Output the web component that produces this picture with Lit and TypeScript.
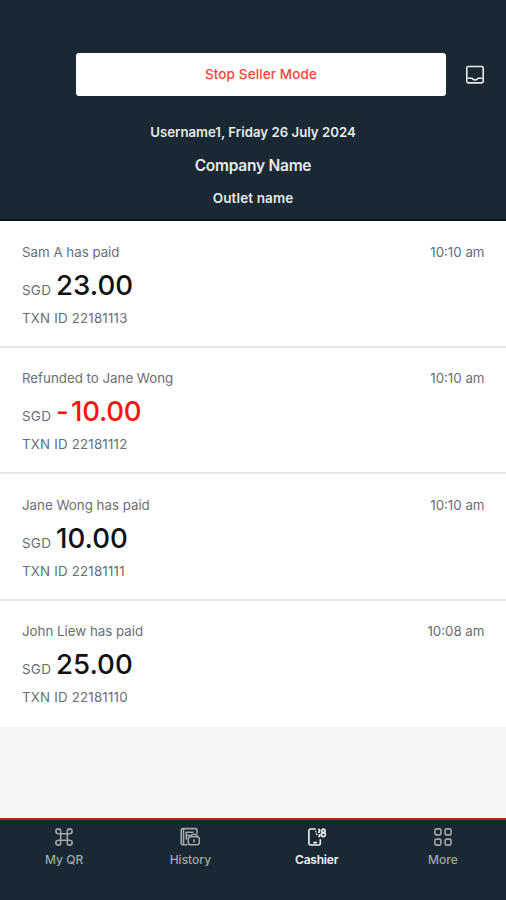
import { LitElement, html, css, svg } from "lit";
import { customElement, property } from "lit/decorators.js";
import { classMap } from "lit/directives/class-map.js";

interface Txn {
  title: string;
  time: string;
  amount: string;
  id: string;
  refund?: boolean;
}

const TXNS: Txn[] = [
  { title: "Sam A has paid", time: "10:10 am", amount: "23.00", id: "22181113" },
  { title: "Refunded to Jane Wong", time: "10:10 am", amount: "- 10.00", id: "22181112", refund: true },
  { title: "Jane Wong has paid", time: "10:10 am", amount: "10.00", id: "22181111" },
  { title: "John Liew has paid", time: "10:08 am", amount: "25.00", id: "22181110" },
];

const ICONS = {
  inbox: svg`<rect x="1.800" y="1.500" width="16.400" height="16.400" rx="1.600"/><path d="M2.500 13.200H7c.6 1.300 1.600 1.800 3 1.800s2.400-.5 3-1.800h4.500"/>`,
  qr: svg`<rect x="6.700" y="6.700" width="6.600" height="6.600"/><path d="M6.700 6.700H4.300a2.400 2.400 0 1 1 2.400-2.400zM13.300 6.700V4.300a2.400 2.400 0 1 1 2.400 2.400zM13.300 13.300h2.400a2.400 2.400 0 1 1-2.400 2.400zM6.700 13.300v2.400a2.400 2.400 0 1 1-2.400-2.400z"/>`,
  history: svg`<path d="M7.500 17.800H2.800A1.600 1.600 0 0 1 1.200 16.200V3.200A1.600 1.600 0 0 1 2.800 1.600h12.600A1.600 1.600 0 0 1 17 3.200v3.600M3.500 1.900v15.600M6.300 12.500V5.300h7M6.800 8.500h3.400"/><rect x="8.300" y="9.800" width="11" height="7.900" rx="2.300"/><path d="M10.600 9.800c.2-1.800 1.300-2.600 3.300-2.600s3.100.8 3.400 2.600M14 12.200v3.200"/>`,
  cashier: svg`<path d="M8.800 2H3.600a1.700 1.700 0 0 0-1.700 1.700v12.600A1.700 1.700 0 0 0 3.600 18h8a1.700 1.700 0 0 0 1.700-1.700V12.300M6.300 15.600h3.600"/><path d="M8.100 4.600h1.200M8.900 7.200h1.600M11 2.500h1.500v2.600h-1.300M12.700 7v2.500h-1.500"/><circle cx="16.400" cy="3.800" r="1.700"/><circle cx="16.400" cy="7.600" r="2"/>`,
  more: svg`<rect x="1.900" y="1.900" width="6" height="6" rx="1.500"/><rect x="12.100" y="1.900" width="6" height="6" rx="1.500"/><rect x="1.900" y="12.100" width="6" height="6" rx="1.500"/><rect x="12.100" y="12.100" width="6" height="6" rx="1.500"/>`,
};

@customElement("ui-icon")
class UiIcon extends LitElement {
  @property() name: keyof typeof ICONS = "more";
  static styles = css`
    :host { display: block; width: 20px; height: 20px; }
    svg { display: block; fill: none; stroke: currentColor; stroke-width: 1.6; stroke-linejoin: round; }
  `;
  render() {
    return html`<svg width="20" height="20" viewBox="0 0 20 20">${ICONS[this.name]}</svg>`;
  }
}

@customElement("txn-row")
class TxnRow extends LitElement {
  @property({ attribute: false }) txn!: Txn;
  static styles = css`
    :host {
      display: block; box-sizing: border-box; height: 126.6px; padding: 20.500px 21.500px 0 22px;
      background: #fff; border-bottom: 2px solid #e4e6e8; color: #686e74;
      font-size: 13.3px; line-height: 20px; letter-spacing: 0;
    }
    :host(:last-child) { border-bottom: 0; }
    .top { display: flex; justify-content: space-between; }
    .sum { display: flex; align-items: baseline; gap: 5px; height: 36px; margin: 5px 0; line-height: 36px; }
    .cur { font-size: 13.5px; letter-spacing: 0.2px; }
    .amount { font-size: 27.6px; font-weight: 500; color: #111; letter-spacing: 0; }
    .refund { color: #fa150c; word-spacing: -4.5px; letter-spacing: -0.3px; }
    .id { letter-spacing: 0.2px; }
  `;
  render() {
    const t = this.txn;
    return html`
      <div class="top"><span>${t.title}</span><span>${t.time}</span></div>
      <div class="sum"><span class="cur">SGD</span><span class=${classMap({ amount: true, refund: !!t.refund })}>${t.amount}</span></div>
      <div class="id">TXN ID ${t.id}</div>
    `;
  }
}

@customElement("app-root")
class AppRoot extends LitElement {
  static styles = css`
    :host {
      display: flex; flex-direction: column; height: 900px; overflow: hidden;
      background: #f4f6f8; font-family: Inter, "Liberation Sans", sans-serif;
    }
    header {
      box-sizing: border-box; height: 221px; flex: none; padding-top: 53px;
      background: #192833; color: #e8eaec; border-bottom: 2px solid #0c161f;
    }
    .bar { display: flex; align-items: center; padding-left: 76px; }
    button {
      width: 370px; height: 43px; padding: 0; border: 0; border-radius: 3px; background: #fff;
      color: #f94535; font: 500 13.5px/43px Inter, sans-serif; letter-spacing: 0.12px;
    }
    .bar ui-icon { margin-left: 19px; }
    .info { display: flex; flex-direction: column; align-items: center; padding-top: 20px; font-size: 13.2px; font-weight: 600; line-height: 33px; }
    .user { letter-spacing: 0.03px; }
    .company { font-size: 15.500px; letter-spacing: -0.25px; }
    .outlet { font-size: 13.500px; letter-spacing: 0.12px; }
    main { flex: 1; }
    nav {
      box-sizing: border-box; height: 82px; flex: none; display: flex; padding: 7px 0 0 1px;
      background: #192833; border-top: 2px solid #d3141b; color: #9fa7ad;
    }
    .tab {
      width: 126.500px; display: flex; flex-direction: column; align-items: center;
      font-size: 12px; font-weight: 500; line-height: 18px; gap: 4px;
    }
    .active { color: #f2f4f5; font-weight: 600; letter-spacing: -0.2px; }
  `;
  render() {
    return html`
      <header>
        <div class="bar"><button>Stop Seller Mode</button><ui-icon name="inbox"></ui-icon></div>
        <div class="info">
          <span class="user">Username1, Friday 26 July 2024</span>
          <span class="company">Company Name</span>
          <span class="outlet">Outlet name</span>
        </div>
      </header>
      <main>${TXNS.map((t) => html`<txn-row .txn=${t}></txn-row>`)}</main>
      <nav>
        <div class="tab"><ui-icon name="qr"></ui-icon><span>My QR</span></div>
        <div class="tab"><ui-icon name="history"></ui-icon><span>History</span></div>
        <div class="tab active"><ui-icon name="cashier"></ui-icon><span>Cashier</span></div>
        <div class="tab"><ui-icon name="more"></ui-icon><span>More</span></div>
      </nav>
    `;
  }
}
